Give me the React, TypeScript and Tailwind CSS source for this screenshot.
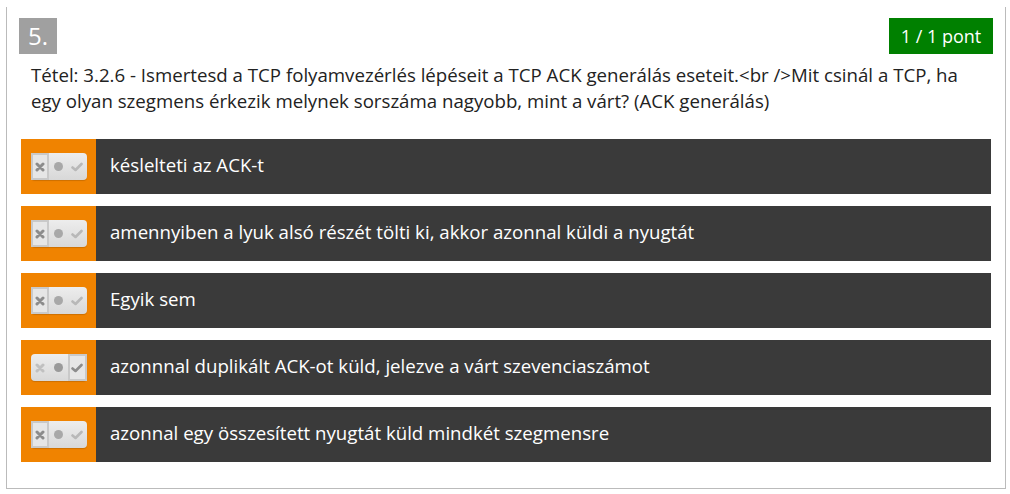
import React from 'react';

const answers = [
  { text: 'késlelteti az ACK-t', state: 'x' },
  { text: 'amennyiben a lyuk alsó részét tölti ki, akkor azonnal küldi a nyugtát', state: 'x' },
  { text: 'Egyik sem', state: 'x' },
  { text: 'azonnnal duplikált ACK-ot küld, jelezve a várt szevenciaszámot', state: 'ok' },
  { text: 'azonnal egy összesített nyugtát küld mindkét szegmensre', state: 'x' },
];

function Toggle({ state }: { state: string }) {
  return (
    <div className="relative flex h-[27px] w-[56px] items-center rounded-[4px] bg-gradient-to-b from-[#ededed] to-[#d8d8d8] shadow-[0_1px_1px_rgba(0,0,0,0.15)]">
      <div className={`flex h-full w-[18px] items-center justify-center ${state === 'x' ? 'border-2 border-[#c9c9c9] bg-[#e6e6e6]' : ''}`}>
        <svg width="10" height="10" viewBox="0 0 10 10">
          <path d="M2 2 L8 8 M8 2 L2 8" stroke={state === 'x' ? '#8c8c8c' : '#c0c0c0'} strokeWidth="3" strokeLinecap="round" />
        </svg>
      </div>
      <div className="flex h-full w-[19px] items-center justify-center">
        <div className={`h-[9px] w-[9px] rounded-full ${state === 'x' ? 'bg-[#a8a8a8]' : 'bg-[#9a9a9a]'}`} />
      </div>
      <div className={`flex h-full w-[19px] items-center justify-center ${state === 'ok' ? 'border-2 border-[#c9c9c9] bg-[#e6e6e6]' : ''}`}>
        <svg width="12" height="10" viewBox="0 0 12 10">
          <path d="M1.5 5.5 L4.5 8 L10.5 2" fill="none" stroke={state === 'ok' ? '#8c8c8c' : '#b8b8b8'} strokeWidth="2.6" strokeLinecap="round" strokeLinejoin="round" />
        </svg>
      </div>
    </div>
  );
}

export default function App() {
  return (
    <div className="min-h-screen bg-white pl-[6px] pt-[7px]" style={{ fontFamily: '"Open Sans", sans-serif' }}>
      <div className="w-[1000px] border-x border-b border-[#bbbbbb] pb-[26px]">
        <div className="flex items-start justify-between pl-[12px] pr-[12px] pt-[11px]">
          <div className="flex h-[36px] w-[38px] items-center justify-center bg-[#a0a0a0] text-[24px] text-white">5.</div>
          <div className="flex h-[36px] w-[104px] items-center justify-center bg-[#008000] text-[18px] text-white">1 / 1 pont</div>
        </div>
        <p className="mt-[8px] pl-[24px] pr-[24px] text-[18.67px] leading-[26px] text-[#222]">
          Tétel: 3.2.6 - Ismertesd a TCP folyamvezérlés lépéseit a TCP ACK generálás eseteit.&lt;br /&gt;Mit csinál a TCP, ha egy olyan szegmens érkezik melynek sorszáma nagyobb, mint a várt? (ACK generálás)
        </p>
        <div className="mt-[25px] flex flex-col gap-[12px] pl-[14px]">
          {answers.map((a) => (
            <div key={a.text} className="flex h-[55px] w-[970px]">
              <div className="flex w-[75px] items-center justify-center bg-[#f08300]">
                <Toggle state={a.state} />
              </div>
              <div className="flex flex-1 items-center bg-[#3a3a3a] pb-[3px] pl-[14px] text-[18.67px] text-white">{a.text}</div>
            </div>
          ))}
        </div>
      </div>
    </div>
  );
}
